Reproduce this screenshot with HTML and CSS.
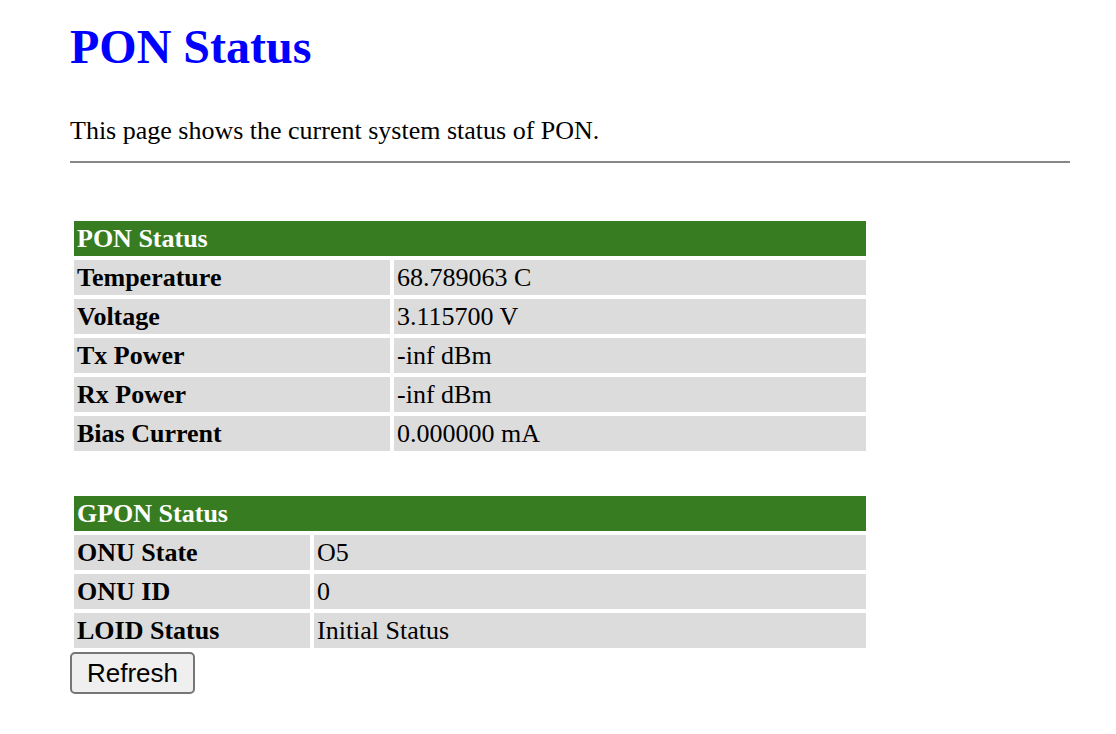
FILE: index.html
```html
<!DOCTYPE html>
<html lang="en">
<head>
  <meta charset="UTF-8">
  <title>PON Status</title>
  <link rel="stylesheet" href="styles.css">
</head>
<body>
  <div class="page">
    <h1 class="title">PON Status</h1>
    <p class="intro">This page shows the current system status of PON.</p>
    <hr class="rule">

    <table class="status pon">
      <tr><th colspan="2" class="head">PON Status</th></tr>
      <tr><td class="label">Temperature</td><td>68.789063 C</td></tr>
      <tr><td class="label">Voltage</td><td>3.115700 V</td></tr>
      <tr><td class="label">Tx Power</td><td>-inf dBm</td></tr>
      <tr><td class="label">Rx Power</td><td>-inf dBm</td></tr>
      <tr><td class="label">Bias Current</td><td>0.000000 mA</td></tr>
    </table>

    <table class="status gpon">
      <tr><th colspan="2" class="head">GPON Status</th></tr>
      <tr><td class="label">ONU State</td><td>O5</td></tr>
      <tr><td class="label">ONU ID</td><td>0</td></tr>
      <tr><td class="label">LOID Status</td><td>Initial Status</td></tr>
    </table>
    <button class="refresh" type="button">Refresh</button>
  </div>
</body>
</html>
```

FILE: styles.css
```css
:root{
  --blue-color:#0000ff;
  --green-color:#387c22;
  --cell-color:#dcdcdc;
  --rule-color:#878787;
}
body{
  margin:0;
  background-color:#ffffff;
  font-family:"Liberation Serif","Times New Roman",serif;
  color:#000000;
}
.page{
  padding:20px 46px 0 70px;
}
.title{
  margin:0 0 44px;
  font-size:48px;
  line-height:53px;
  font-weight:700;
  color:var(--blue-color);
}
.intro{
  margin:0;
  font-size:26px;
  line-height:28px;
}
.rule{
  margin:16px 0 0;
  border:0;
  height:2px;
  background-color:var(--rule-color);
}
.status{
  width:800px;
  border-spacing:4px;
  font-size:26px;
}
.pon{
  margin-top:54px;
}
.gpon{
  margin-top:37px;
}
.status th,
.status td{
  padding:4px 3px;
  line-height:27px;
  text-align:left;
  background-color:var(--cell-color);
}
.status .head{
  background-color:var(--green-color);
  color:#ffffff;
  font-weight:700;
}
.status .label{
  font-weight:700;
}
.pon .label{
  width:310px;
}
.gpon .label{
  width:230px;
}
.refresh{
  display:block;
  margin:0;
  padding:4px 15px;
  font-family:"Liberation Sans",Arial,sans-serif;
  font-size:26px;
  line-height:30px;
  color:#000000;
  background-color:#efefef;
  border:2px solid #767676;
  border-radius:5px;
}
```
